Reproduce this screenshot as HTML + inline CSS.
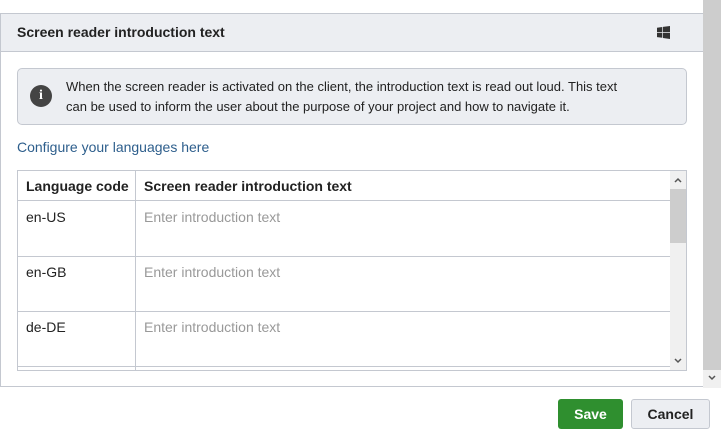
<!DOCTYPE html>
<html><head><style>
*{margin:0;padding:0;box-sizing:border-box}
body{width:721px;height:439px;overflow:hidden;background:#fff;font-family:"Liberation Sans",sans-serif;color:#222;position:relative}
.a{position:absolute}
</style></head><body>
<div class="a" style="left:0;top:13px;width:703px;height:374px;border:1px solid #c4c8d0;border-right:none"></div>
<div class="a" style="left:1px;top:14px;width:702px;height:38px;background:#eceef2;border-bottom:1px solid #c4c8d0"></div>
<div class="a" style="left:17px;top:24px;font-size:14px;font-weight:bold;color:#222">Screen reader introduction text</div>
<svg class="a" style="left:657px;top:26px" width="13" height="13" viewBox="0 0 13 13"><path d="M0 1.8L5.3 1v5H0zM6 .9L13 0v6H6zM0 6.8h5.3v5L0 11.1zM6 6.8h7V13L6 12z" fill="#333"/></svg>
<div class="a" style="left:703px;top:0;width:18px;height:370px;background:#cdcdcd"></div>
<div class="a" style="left:703px;top:370px;width:18px;height:18px;background:#f0f0f0"></div>
<svg class="a" style="left:708px;top:375px" width="8" height="6" viewBox="0 0 8 6"><path d="M1 1l3 3 3-3" stroke="#555" stroke-width="1.5" fill="none"/></svg>
<div class="a" style="left:17px;top:68px;width:670px;height:57px;background:#eceef2;border:1px solid #c4c8d0;border-radius:5px"></div>
<div class="a" style="left:30px;top:85px;width:22px;height:22px;border-radius:50%;background:#444;color:#fff;font-weight:bold;font-size:14px;text-align:center;line-height:22px;font-family:'Liberation Serif',serif">i</div>
<div class="a" style="left:66px;top:77px;width:568px;font-size:13px;line-height:20px;color:#222">When the screen reader is activated on the client, the introduction text is read out loud. This text can be used to inform the user about the purpose of your project and how to navigate it.</div>
<div class="a" style="left:17px;top:139px;font-size:14px;color:#2d5e8c">Configure your languages here</div>
<div class="a" style="left:17px;top:170px;width:670px;height:201px;border:1px solid #c4c8d0;overflow:hidden">
 <div class="a" style="left:0;top:0;width:652px;height:30px;border-bottom:1px solid #c4c8d0"></div>
 <div class="a" style="left:117px;top:0;width:1px;height:200px;background:#c4c8d0"></div>
 <div class="a" style="left:8px;top:7px;font-size:14px;font-weight:bold">Language code</div>
 <div class="a" style="left:126px;top:7px;font-size:14px;font-weight:bold">Screen reader introduction text</div>
 <div class="a" style="left:0;top:85px;width:652px;height:1px;background:#c4c8d0"></div>
 <div class="a" style="left:0;top:140px;width:652px;height:1px;background:#c4c8d0"></div>
 <div class="a" style="left:0;top:195px;width:652px;height:1px;background:#c4c8d0"></div>
 <div class="a" style="left:8px;top:38px;font-size:14px">en-US</div>
 <div class="a" style="left:8px;top:93px;font-size:14px">en-GB</div>
 <div class="a" style="left:8px;top:148px;font-size:14px">de-DE</div>
 <div class="a" style="left:126px;top:38px;font-size:14px;color:#999">Enter introduction text</div>
 <div class="a" style="left:126px;top:93px;font-size:14px;color:#999">Enter introduction text</div>
 <div class="a" style="left:126px;top:148px;font-size:14px;color:#999">Enter introduction text</div>
 <div class="a" style="left:652px;top:0;width:17px;height:200px;background:#f0f0f0"></div>
 <div class="a" style="left:652px;top:18px;width:17px;height:54px;background:#cdcdcd"></div>
 <svg class="a" style="left:656px;top:6px" width="8" height="6" viewBox="0 0 8 6"><path d="M1 5l3-3 3 3" stroke="#555" stroke-width="1.5" fill="none"/></svg>
 <svg class="a" style="left:656px;top:187px" width="8" height="6" viewBox="0 0 8 6"><path d="M1 1l3 3 3-3" stroke="#555" stroke-width="1.5" fill="none"/></svg>
</div>
<div class="a" style="left:558px;top:399px;width:65px;height:30px;background:#2f8f2f;border-radius:3px;color:#fff;font-weight:bold;font-size:14px;text-align:center;line-height:30px">Save</div>
<div class="a" style="left:631px;top:399px;width:79px;height:30px;background:#eceef2;border:1px solid #c4c8d0;border-radius:3px;color:#222;font-weight:bold;font-size:14px;text-align:center;line-height:28px">Cancel</div>
</body></html>
